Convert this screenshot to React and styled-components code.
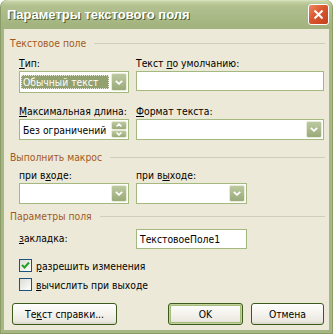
import styled, { createGlobalStyle } from 'styled-components';

const GlobalStyle = createGlobalStyle`
  html, body {
    margin: 0;
    padding: 0;
    background: #fff;
  }
  body {
    font-family: "DejaVu Sans Condensed", "Liberation Sans", sans-serif;
    font-size: 10.3px;
    color: #000;
  }
`;

const Window = styled.div`
  width: 333px;
  height: 334px;
  box-sizing: border-box;
  display: flex;
  flex-direction: column;
  background: #a7b783;
  border: 1px solid #8c9c69;
  border-top: none;
  border-radius: 7px 7px 0 0;
  padding: 0 3px 3px 3px;
`;

const TitleBar = styled.div`
  height: 29px;
  margin: 0 -3px;
  padding: 0 3px 0 6px;
  display: flex;
  align-items: center;
  justify-content: space-between;
  border-radius: 7px 7px 0 0;
  background: linear-gradient(#dde5c4 0, #c2cfa2 2px, #b1c08e 6px, #a9b986 60%, #a2b27e 100%);
`;

const Title = styled.div`
  font-family: "Liberation Sans", sans-serif;
  font-weight: bold;
  font-size: 13px;
  color: #fff;
  text-shadow: 1px 1px 0 #4f5c33;
`;

const CloseButton = styled.div`
  width: 21px;
  height: 21px;
  box-sizing: border-box;
  border: 1px solid #fff;
  border-radius: 3px;
  background: linear-gradient(135deg, #ec8a62 0%, #d9562e 45%, #c2401c 100%);
  display: flex;
  align-items: center;
  justify-content: center;
`;

const Client = styled.div`
  flex: 1;
  background: #ece9d8;
  padding: 7px 4px 0 6px;
  display: flex;
  flex-direction: column;
`;

const GroupHeading = styled.div`
  display: flex;
  align-items: center;
  gap: 8px;
  line-height: 14px;
  color: #a3591b;
  margin-top: ${(p) => p.$top || 0}px;

  &::after {
    content: '';
    flex: 1;
    height: 1px;
    background: #d0cdbb;
  }
`;

const Fields = styled.div`
  display: grid;
  grid-template-columns: 110px 188px;
  column-gap: 7px;
  row-gap: 12px;
  padding-left: 9px;
  margin-top: ${(p) => p.$top || 0}px;
`;

const Field = styled.div`
  display: flex;
  flex-direction: column;
  align-items: ${(p) => (p.$narrow ? 'flex-start' : 'stretch')};
`;

const Label = styled.div`
  line-height: 13px;
  margin-bottom: 1px;
  white-space: nowrap;

  u {
    text-decoration: underline;
    text-underline-offset: 1px;
  }
`;

const TextBox = styled.div`
  height: ${(p) => p.$h || 20}px;
  width: ${(p) => (p.$w ? `${p.$w}px` : 'auto')};
  box-sizing: border-box;
  border: 1px solid #a4b97f;
  background: #fff;
  padding-left: 3px;
  display: flex;
  align-items: center;
  white-space: nowrap;
`;

const Combo = styled.div`
  height: ${(p) => p.$h || 22}px;
  width: ${(p) => (p.$w ? `${p.$w}px` : 'auto')};
  box-sizing: border-box;
  border: 1px solid #a4b97f;
  background: #fff;
  padding: 1px;
  display: flex;
  gap: 1px;
`;

const ComboValue = styled.div`
  flex: 1;
  display: flex;
  align-items: center;
  padding-left: ${(p) => (p.$selected ? 0 : 2)}px;
  white-space: nowrap;
  overflow: hidden;
`;

const Highlight = styled.div`
  flex: 1;
  height: 14px;
  box-sizing: border-box;
  margin-right: 1px;
  padding-left: 1px;
  background: #93a070;
  color: #fff;
  border: 1px dotted #e8ecd8;
  display: flex;
  align-items: center;
`;

const ArrowButton = styled.div`
  width: 16px;
  box-sizing: border-box;
  border: 1px solid #e6ecd7;
  border-radius: 2px;
  background: linear-gradient(#bcc9a0, #9aaa79);
  display: flex;
  align-items: center;
  justify-content: center;
  flex: ${(p) => (p.$half ? 1 : 'none')};
`;

const SpinColumn = styled.div`
  width: 16px;
  display: flex;
  flex-direction: column;
`;

const RowLine = styled.div`
  display: grid;
  grid-template-columns: 117px 111px;
  align-items: center;
  padding-left: 9px;
  margin-top: ${(p) => p.$top || 0}px;
`;

const CheckRow = styled.label`
  display: flex;
  align-items: center;
  gap: 4px;
  padding-left: 9px;
  height: 13px;
  margin-top: ${(p) => p.$top || 0}px;
`;

const CheckBox = styled.div`
  width: 13px;
  height: 13px;
  box-sizing: border-box;
  border: 1px solid #1c5180;
  background: linear-gradient(135deg, #dcdcd7 0%, #f4f4f0 70%, #fff 100%);
  display: flex;
  align-items: center;
  justify-content: center;
`;

const Buttons = styled.div`
  display: flex;
  gap: 8px;
  padding: 0 1px 0 2px;
  margin-top: 12px;
`;

const Button = styled.div`
  width: ${(p) => p.$w}px;
  height: 22px;
  box-sizing: border-box;
  border: 1px solid #3d5a1d;
  border-radius: 3px;
  background: linear-gradient(#ffffff 0%, #f6f5f0 40%, #ebe9e0 85%, #d8d4c6 100%);
  box-shadow: ${(p) => (p.$default ? 'inset 0 0 0 1px #c2d29c, inset 0 0 0 2px #a7bb7c' : 'none')};
  display: flex;
  align-items: center;
  justify-content: center;
  margin-right: ${(p) => (p.$push ? 'auto' : '0')};
`;

const Chevron = ({ up }) => (
  <svg width="8" height="5" viewBox="0 0 8 5">
    <path
      d={up ? 'M0.8 4.2 L4 1.2 L7.2 4.2' : 'M0.8 0.8 L4 3.8 L7.2 0.8'}
      fill="none"
      stroke="#fff"
      strokeWidth="1.8"
    />
  </svg>
);

const SmallChevron = ({ up }) => (
  <svg width="6" height="4" viewBox="0 0 6 4">
    <path
      d={up ? 'M0.5 3.5 L3 1 L5.5 3.5' : 'M0.5 0.5 L3 3 L5.5 0.5'}
      fill="none"
      stroke="#fff"
      strokeWidth="1.5"
    />
  </svg>
);

const Check = () => (
  <svg width="9" height="9" viewBox="0 0 9 9">
    <path d="M1 4 L3.5 6.5 L8 1.5" fill="none" stroke="#21a121" strokeWidth="2" />
  </svg>
);

const CloseIcon = () => (
  <svg width="11" height="11" viewBox="0 0 11 11">
    <path d="M1.5 1.5 L9.5 9.5 M9.5 1.5 L1.5 9.5" stroke="#fff" strokeWidth="2" />
  </svg>
);

export default function App() {
  return (
    <>
      <GlobalStyle />
      <Window>
        <TitleBar>
          <Title>Параметры текстового поля</Title>
          <CloseButton>
            <CloseIcon />
          </CloseButton>
        </TitleBar>
        <Client>
          <GroupHeading>Текстовое поле</GroupHeading>
          <Fields $top={7}>
            <Field>
              <Label>
                <u>Т</u>ип:
              </Label>
              <Combo>
                <ComboValue $selected>
                  <Highlight>Обычный текст</Highlight>
                </ComboValue>
                <ArrowButton>
                  <Chevron />
                </ArrowButton>
              </Combo>
            </Field>
            <Field>
              <Label>
                Текст <u>п</u>о умолчанию:
              </Label>
              <TextBox />
            </Field>
            <Field>
              <Label>
                <u>М</u>аксимальная длина:
              </Label>
              <Combo $h={21}>
                <ComboValue>Без ограничений</ComboValue>
                <SpinColumn>
                  <ArrowButton $half>
                    <SmallChevron up />
                  </ArrowButton>
                  <ArrowButton $half>
                    <SmallChevron />
                  </ArrowButton>
                </SpinColumn>
              </Combo>
            </Field>
            <Field>
              <Label>
                <u>Ф</u>ормат текста:
              </Label>
              <Combo $h={21}>
                <ComboValue />
                <ArrowButton>
                  <Chevron />
                </ArrowButton>
              </Combo>
            </Field>
          </Fields>

          <GroupHeading $top={10}>Выполнить макрос</GroupHeading>
          <Fields $top={5}>
            <Field>
              <Label>
                при в<u>х</u>оде:
              </Label>
              <Combo $h={21}>
                <ComboValue />
                <ArrowButton>
                  <Chevron />
                </ArrowButton>
              </Combo>
            </Field>
            <Field $narrow>
              <Label>
                при в<u>ы</u>ходе:
              </Label>
              <Combo $h={21} $w={111}>
                <ComboValue />
                <ArrowButton>
                  <Chevron />
                </ArrowButton>
              </Combo>
            </Field>
          </Fields>

          <GroupHeading $top={5}>Параметры поля</GroupHeading>
          <RowLine $top={6}>
            <Label>
              <u>з</u>акладка:
            </Label>
            <TextBox>ТекстовоеПоле1</TextBox>
          </RowLine>
          <CheckRow $top={10}>
            <CheckBox>
              <Check />
            </CheckBox>
            <span>
              <u>р</u>азрешить изменения
            </span>
          </CheckRow>
          <CheckRow $top={6}>
            <CheckBox />
            <span>
              <u>в</u>ычислить при выходе
            </span>
          </CheckRow>

          <Buttons>
            <Button $w={105} $push>
              <span>
                Те<u>к</u>ст справки...
              </span>
            </Button>
            <Button $w={75} $default>
              OK
            </Button>
            <Button $w={73}>Отмена</Button>
          </Buttons>
        </Client>
      </Window>
    </>
  );
}
